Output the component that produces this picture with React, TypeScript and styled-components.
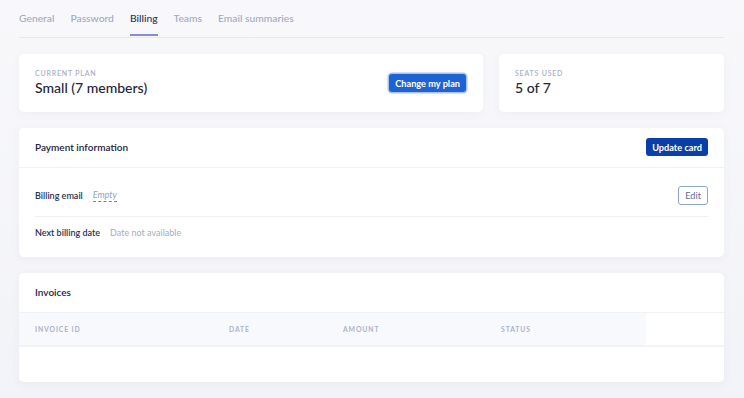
import React from "react";
import styled, { createGlobalStyle } from "styled-components";

const Global = createGlobalStyle`
  html, body { margin: 0; padding: 0; }
  body {
    background: linear-gradient(180deg, #f8f8fb 0%, #f2f3f8 100%);
    font-family: Lato, "Open Sans", Arial, sans-serif;
    color: #1d2340;
    -webkit-font-smoothing: antialiased;
  }
  #root { min-height: 398px; }
`;

const Page = styled.div`
  padding: 0 20px 17px 19px;
  display: flex;
  flex-direction: column;
`;

const Tabs = styled.nav`
  display: flex;
  gap: 16px;
  height: 37px;
  border-bottom: 1px solid #e6e8f0;
  margin-bottom: 16px;
`;

const Tab = styled.div<{ $active?: boolean }>`
  font-size: 10.3px;
  font-weight: 500;
  line-height: 36px;
  color: ${(p) => (p.$active ? "#2a3150" : "#9ea8c3")};
  border-bottom: 2px solid ${(p) => (p.$active ? "#7e92cb" : "transparent")};
  height: 36px;
  box-sizing: border-box;
  margin-bottom: -1px;
`;

const Stack = styled.div`
  display: flex;
  flex-direction: column;
  gap: 16px;
`;

const TopRow = styled.div`
  display: grid;
  grid-template-columns: 1fr 225px;
  gap: 16px;
`;

const Card = styled.section`
  background: #fff;
  border-radius: 5px;
  box-shadow: 0 2px 10px rgba(60, 70, 120, 0.05);
  overflow: hidden;
`;

const PlanCard = styled(Card)`
  height: 58px;
  display: flex;
  align-items: center;
  justify-content: space-between;
  padding: 0 16px;
`;

const PlanInfo = styled.div`
  display: flex;
  flex-direction: column;
  gap: 2px;
`;

const Label = styled.div`
  font-size: 7px;
  letter-spacing: 0.8px;
  color: #a8b0c6;
  text-transform: uppercase;
  font-weight: 600;
`;

const Value = styled.div`
  font-size: 14px;
  font-weight: 500;
  color: #1d2340;
  line-height: 18px;
`;

const PrimaryButton = styled.button<{ $dark?: boolean; $ring?: boolean }>`
  font-family: inherit;
  font-size: 9.2px;
  font-weight: 700;
  color: #fff;
  background: ${(p) => (p.$dark ? "#0b3fa8" : "#1f62d4")};
  border: none;
  border-radius: 3px;
  padding: 0 6px;
  height: 18px;
  box-shadow: ${(p) => (p.$ring ? "0 0 0 1.5px #a9c2ef" : "none")};
  margin-right: ${(p) => (p.$ring ? "1px" : "0")};
`;

const OutlineButton = styled.button`
  font-family: inherit;
  font-size: 9.2px;
  color: #5e6d95;
  background: #fff;
  border: 1px solid #8da3d6;
  border-radius: 3px;
  height: 19px;
  padding: 0 6px;
`;

const CardHeader = styled.header`
  height: 40px;
  display: flex;
  align-items: center;
  justify-content: space-between;
  padding: 0 16px 1px;
  border-bottom: 1px solid #f0f1f6;
  box-sizing: border-box;
`;

const CardTitle = styled.h2`
  margin: 0;
  font-size: 10px;
  font-weight: 600;
  color: #1d2340;
`;

const PaymentBody = styled.div`
  padding: 8px 16px 8px;
`;

const InfoRow = styled.div<{ $h: number; $lift: number; $divider?: boolean }>`
  display: flex;
  align-items: center;
  gap: 10px;
  height: ${(p) => p.$h}px;
  box-sizing: border-box;
  padding-bottom: ${(p) => p.$lift}px;
  border-bottom: ${(p) => (p.$divider ? "1px solid #eef0f5" : "none")};
`;

const RowLabel = styled.span`
  font-size: 9px;
  font-weight: 600;
  color: #2a3150;
`;

const Muted = styled.span`
  font-size: 9px;
  color: #a3acc6;
`;

const EmptyLink = styled.span`
  font-size: 9px;
  font-style: italic;
  color: #8e9fca;
  border-bottom: 1px dashed #4a86dc;
  line-height: 12px;
`;

const Spacer = styled.div`
  flex: 1;
`;

const TableHead = styled.div`
  display: grid;
  grid-template-columns: 194px 114px 158px 161px 1fr;
  height: 32px;
  border-bottom: 2px solid #f2f3f8;
`;

const Th = styled.div<{ $blank?: boolean }>`
  background: ${(p) => (p.$blank ? "#fff" : "#f8f9fc")};
  font-size: 6.8px;
  font-weight: 700;
  letter-spacing: 0.9px;
  color: #aab2c8;
  text-transform: uppercase;
  display: flex;
  align-items: center;
  padding-left: 16px;
`;

const TableBody = styled.div`
  height: 35px;
`;

export default function App() {
  return (
    <>
      <Global />
      <Page>
        <Tabs>
          <Tab>General</Tab>
          <Tab>Password</Tab>
          <Tab $active>Billing</Tab>
          <Tab>Teams</Tab>
          <Tab>Email summaries</Tab>
        </Tabs>
        <Stack>
          <TopRow>
            <PlanCard>
              <PlanInfo>
                <Label>Current plan</Label>
                <Value>Small (7 members)</Value>
              </PlanInfo>
              <PrimaryButton $ring>Change my plan</PrimaryButton>
            </PlanCard>
            <PlanCard>
              <PlanInfo>
                <Label>Seats used</Label>
                <Value>5 of 7</Value>
              </PlanInfo>
            </PlanCard>
          </TopRow>
          <Card>
            <CardHeader>
              <CardTitle>Payment information</CardTitle>
              <PrimaryButton $dark>Update card</PrimaryButton>
            </CardHeader>
            <PaymentBody>
              <InfoRow $h={41} $lift={2} $divider>
                <RowLabel>Billing email</RowLabel>
                <EmptyLink>Empty</EmptyLink>
                <Spacer />
                <OutlineButton>Edit</OutlineButton>
              </InfoRow>
              <InfoRow $h={32} $lift={2}>
                <RowLabel>Next billing date</RowLabel>
                <Muted>Date not available</Muted>
              </InfoRow>
            </PaymentBody>
          </Card>
          <Card>
            <CardHeader>
              <CardTitle>Invoices</CardTitle>
            </CardHeader>
            <TableHead>
              <Th>Invoice ID</Th>
              <Th>Date</Th>
              <Th>Amount</Th>
              <Th>Status</Th>
              <Th $blank />
            </TableHead>
            <TableBody />
          </Card>
        </Stack>
      </Page>
    </>
  );
}
